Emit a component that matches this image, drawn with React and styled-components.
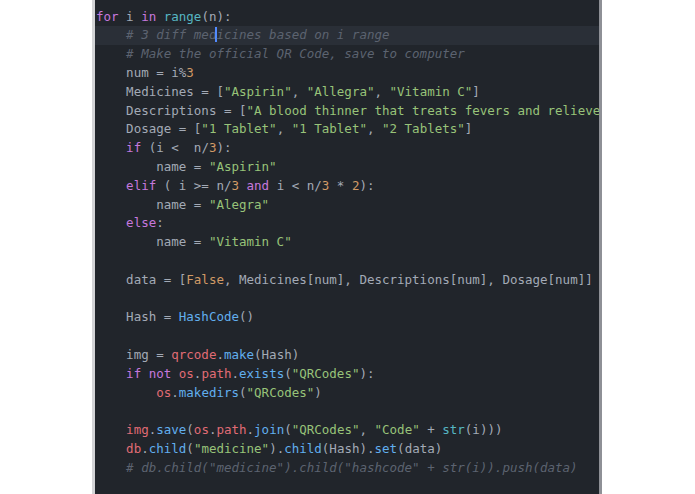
import React from "react";
import styled, { createGlobalStyle } from "styled-components";

const Global = createGlobalStyle`
  html, body { margin: 0; padding: 0; background: #ffffff; }
  body { width: 695px; height: 494px; overflow: hidden; }
`;

const Page = styled.div`
  width: 695px;
  height: 494px;
  display: flex;
  background: #ffffff;
`;

const Editor = styled.div`
  margin-left: 92px;
  width: 503px;
  height: 494px;
  background: #21252b;
  border-left: 3px solid #d3d4d6;
  border-right: 3px solid #8e9096;
  padding: 7.6px 0 0 1px;
  box-sizing: content-box;
  overflow: hidden;
  font-family: "DejaVu Sans Mono", "Liberation Mono", monospace;
  font-size: 12.5px;
  color: #a3aab6;
`;

const Line = styled.div`
  height: 18.8px;
  line-height: 18.8px;
  white-space: pre;
  margin-left: -1px;
  padding-left: 1px;
  background: ${(p) => (p.$active ? "#2a2f37" : "transparent")};
  position: relative;
`;

const colors = {
  k: "#c678dd",
  f: "#61afef",
  b: "#56b6c2",
  s: "#98c379",
  n: "#d19a66",
  r: "#e06c75",
  c: "#5c6370",
  p: "#a3aab6",
};

const Tok = styled.span`
  color: ${(p) => colors[p.$t]};
  font-style: ${(p) => (p.$t === "c" ? "italic" : "normal")};
`;

const Cursor = styled.span`
  display: inline-block;
  width: 2px;
  height: 15px;
  background: #528bff;
  vertical-align: -3px;
  margin: 0 -1px;
`;

const I = "    ";
const I2 = "        ";

const lines = [
  [["k", "for"], ["p", " i "], ["k", "in"], ["p", " "], ["b", "range"], ["p", "(n):"]],
  { active: true, toks: [["c", I + "# 3 diff med"], ["cursor"], ["c", "icines based on i range"]] },
  [["c", I + "# Make the official QR Code, save to computer"]],
  [["p", I + "num = i%"], ["n", "3"]],
  [["p", I + "Medicines = ["], ["s", '"Aspirin"'], ["p", ", "], ["s", '"Allegra"'], ["p", ", "], ["s", '"Vitamin C"'], ["p", "]"]],
  [["p", I + "Descriptions = ["], ["s", '"A blood thinner that treats fevers and relieves pain"']],
  [["p", I + "Dosage = ["], ["s", '"1 Tablet"'], ["p", ", "], ["s", '"1 Tablet"'], ["p", ", "], ["s", '"2 Tablets"'], ["p", "]"]],
  [["p", I], ["k", "if"], ["p", " (i <  n/"], ["n", "3"], ["p", "):"]],
  [["p", I2 + "name = "], ["s", '"Aspirin"']],
  [["p", I], ["k", "elif"], ["p", " ( i >= n/"], ["n", "3"], ["p", " "], ["k", "and"], ["p", " i < n/"], ["n", "3"], ["p", " * "], ["n", "2"], ["p", "):"]],
  [["p", I2 + "name = "], ["s", '"Alegra"']],
  [["p", I], ["k", "else"], ["p", ":"]],
  [["p", I2 + "name = "], ["s", '"Vitamin C"']],
  [],
  [["p", I + "data = ["], ["n", "False"], ["p", ", Medicines[num], Descriptions[num], Dosage[num]]"]],
  [],
  [["p", I + "Hash = "], ["f", "HashCode"], ["p", "()"]],
  [],
  [["p", I + "img = "], ["r", "qrcode"], ["p", "."], ["f", "make"], ["p", "(Hash)"]],
  [["p", I], ["k", "if not"], ["p", " "], ["r", "os"], ["p", "."], ["r", "path"], ["p", "."], ["f", "exists"], ["p", "("], ["s", '"QRCodes"'], ["p", "):"]],
  [["p", I2], ["r", "os"], ["p", "."], ["f", "makedirs"], ["p", "("], ["s", '"QRCodes"'], ["p", ")"]],
  [],
  [["p", I], ["r", "img"], ["p", "."], ["f", "save"], ["p", "("], ["r", "os"], ["p", "."], ["r", "path"], ["p", "."], ["f", "join"], ["p", "("], ["s", '"QRCodes"'], ["p", ", "], ["s", '"Code"'], ["p", " + "], ["b", "str"], ["p", "(i)))"]],
  [["p", I], ["r", "db"], ["p", "."], ["f", "child"], ["p", "("], ["s", '"medicine"'], ["p", ")."], ["f", "child"], ["p", "(Hash)."], ["f", "set"], ["p", "(data)"]],
  [["c", I + '# db.child("medicine").child("hashcode" + str(i)).push(data)']],
  [],
];

export default function App() {
  return (
    <Page>
      <Global />
      <Editor>
        {lines.map((ln, i) => {
          const active = !Array.isArray(ln) && ln.active;
          const toks = Array.isArray(ln) ? ln : ln.toks;
          return (
            <Line key={i} $active={active}>
              {toks.length === 0 ? " " : toks.map((t, j) =>
                t[0] === "cursor" ? <Cursor key={j} /> : <Tok key={j} $t={t[0]}>{t[1]}</Tok>
              )}
            </Line>
          );
        })}
      </Editor>
    </Page>
  );
}
